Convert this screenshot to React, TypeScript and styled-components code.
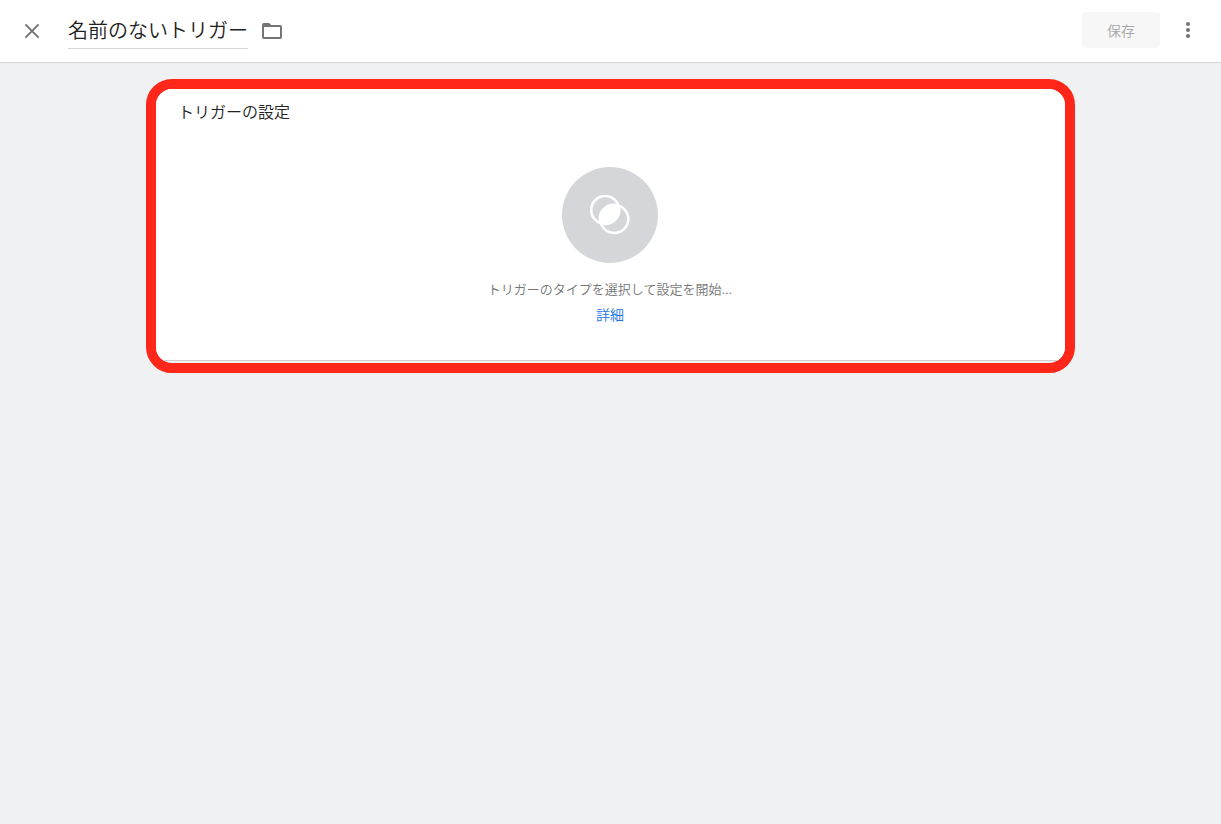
import React, { useState } from "react";
import styled, { createGlobalStyle } from "styled-components";

const GlobalStyle = createGlobalStyle`
  *, *::before, *::after { box-sizing: border-box; }
  body {
    margin: 0;
    background: #eff1f3;
    color: #212121;
    font-family: "Liberation Sans", "Noto Sans CJK JP", sans-serif;
    font-weight: 350;
  }
`;

const Header = styled.header`
  display: flex;
  align-items: center;
  height: 63px;
  padding: 0 21px 2px 20px;
  background: #fff;
  border-bottom: 1px solid #d5d6db;
`;

const IconButton = styled.button`
  display: flex;
  align-items: center;
  justify-content: center;
  width: 24px;
  height: 24px;
  padding: 0;
  border: 0;
  background: none;
  color: #757575;
  cursor: pointer;
`;

const NameInput = styled.input`
  width: 180px;
  height: 38px;
  margin: 0 12px 0 24px;
  padding: 0;
  border: 0;
  border-bottom: 1px solid #d5d6db;
  outline: 0;
  background: none;
  color: #212121;
  font: inherit;
  font-size: 20px;
`;

const Actions = styled.div`
  display: flex;
  align-items: center;
  gap: 16px;
  margin-left: auto;
`;

const SaveButton = styled.button`
  width: 78px;
  height: 36px;
  padding: 0;
  border: 0;
  border-radius: 4px;
  background: #f7f7f7;
  color: #a6a6a6;
  font: inherit;
  font-size: 14px;
`;

const Main = styled.main`
  padding: 16px;
`;

const Highlight = styled.section`
  max-width: 929px;
  margin: 0 auto;
  overflow: hidden;
  border: 10px solid #ff261a;
  border-radius: 26px;
`;

const Card = styled.div`
  padding: 12px 23px 33px 22px;
  margin-bottom: 2px;
  background: #fff;
  border-bottom: 1px solid #cfcfd2;
`;

const CardTitle = styled.h2`
  margin: 0 0 42px;
  font-size: 16px;
  font-weight: 350;
  line-height: 24px;
`;

const EmptyState = styled.div`
  display: flex;
  flex-direction: column;
  align-items: center;
`;

const TypeButton = styled.button`
  width: 96px;
  height: 96px;
  padding: 0;
  border: 0;
  border-radius: 50%;
  background: #d5d6da;
  cursor: pointer;

  svg { display: block; }
`;

const Hint = styled.p`
  margin: 14px 0 0;
  color: #757575;
  font-size: 13px;
  line-height: 26px;
`;

const DetailLink = styled.a`
  color: #1a73e8;
  font-size: 14px;
  line-height: 24px;
  text-decoration: none;
`;

const CloseIcon = () => (
  <svg width="24" height="24" viewBox="0 0 24 24" fill="none" stroke="currentColor" strokeWidth="2">
    <path d="M5.4 6.4 18.6 19.6M18.6 6.4 5.4 19.6" />
  </svg>
);

const FolderIcon = () => (
  <svg width="24" height="24" viewBox="0 0 24 24" fill="currentColor">
    <path
      fillRule="evenodd"
      d="M4 5H9.2L11.2 7H20A2 2 0 0 1 22 9V19A2 2 0 0 1 20 21H4A2 2 0 0 1 2 19V7A2 2 0 0 1 4 5ZM4 9V19H20V9Z"
    />
  </svg>
);

const MoreIcon = () => (
  <svg width="24" height="24" viewBox="0 0 24 24" fill="currentColor">
    <circle cx="12" cy="6" r="2.1" />
    <circle cx="12" cy="12" r="2.1" />
    <circle cx="12" cy="18" r="2.1" />
  </svg>
);

const TriggerIcon = () => (
  <svg width="96" height="96" viewBox="0 0 96 96" fill="none" stroke="#fff" strokeWidth="2.6">
    <circle cx="43.2" cy="43" r="14" />
    <circle cx="52.3" cy="52" r="14" />
    <path fill="#fff" stroke="none" d="M37.4 56.8A15.2 15.2 0 0 0 57.2 37.7A15.2 15.2 0 0 0 37.4 56.8Z" />
  </svg>
);

export default function App() {
  const [name, setName] = useState("名前のないトリガー");
  return (
    <>
      <GlobalStyle />
      <Header>
        <IconButton aria-label="閉じる"><CloseIcon /></IconButton>
        <NameInput aria-label="トリガー名" value={name} onChange={(e) => setName(e.target.value)} />
        <IconButton aria-label="フォルダ"><FolderIcon /></IconButton>
        <Actions>
          <SaveButton disabled>保存</SaveButton>
          <IconButton aria-label="その他"><MoreIcon /></IconButton>
        </Actions>
      </Header>
      <Main>
        <Highlight>
          <Card>
            <CardTitle>トリガーの設定</CardTitle>
            <EmptyState>
              <TypeButton aria-label="トリガーのタイプを選択"><TriggerIcon /></TypeButton>
              <Hint>トリガーのタイプを選択して設定を開始...</Hint>
              <DetailLink href="#">詳細</DetailLink>
            </EmptyState>
          </Card>
        </Highlight>
      </Main>
    </>
  );
}
